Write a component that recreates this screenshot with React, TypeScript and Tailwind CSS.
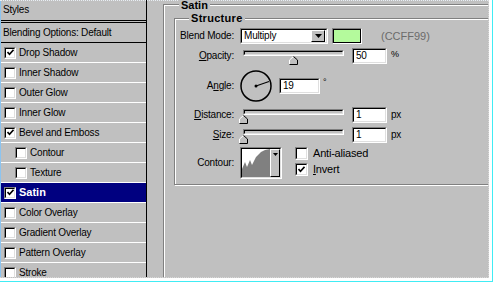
import React from 'react';

// Photoshop "Layer Style" dialog, Satin page (classic Win98 look)

const sunkenOuter = 'border border-t-[#808080] border-l-[#808080] border-b-white border-r-white';
const sunkenInner = 'border border-t-black border-l-black border-b-[#dfdfdf] border-r-[#dfdfdf]';
const raised = 'border border-t-white border-l-white border-b-black border-r-black';

type Item = { label: string; checked?: boolean; sub?: boolean; active?: boolean };

const items: Item[] = [
  { label: 'Drop Shadow', checked: true },
  { label: 'Inner Shadow' },
  { label: 'Outer Glow' },
  { label: 'Inner Glow' },
  { label: 'Bevel and Emboss', checked: true },
  { label: 'Contour', sub: true },
  { label: 'Texture', sub: true },
  { label: 'Satin', checked: true, active: true },
  { label: 'Color Overlay' },
  { label: 'Gradient Overlay' },
  { label: 'Pattern Overlay' },
  { label: 'Stroke' },
];

function Check({ checked, big }: { checked?: boolean; big?: boolean }) {
  return (
    <span className={`flex shrink-0 ${big ? 'w-[13px] h-[13px]' : 'w-[12px] h-[12px]'} ${sunkenOuter}`}>
      <span className={`flex flex-1 items-center justify-center bg-white ${sunkenInner}`}>
        {checked && (
          <svg width="7" height="7" viewBox="0 0 7 7">
            <path d="M0.5 3 L2.5 5.2 L6.5 0.8" stroke="black" strokeWidth="1.6" fill="none" />
          </svg>
        )}
      </span>
    </span>
  );
}

function Field({ value, w }: { value: string; w: string }) {
  return (
    <div className={`${w} h-[16px] flex ${sunkenOuter}`}>
      <div className={`flex-1 flex items-center bg-white pl-[2px] ${sunkenInner}`}>{value}</div>
    </div>
  );
}

function Thumb() {
  return (
    <svg width="9" height="9" viewBox="0 0 9 9">
      <path d="M0.5 8.5 V4 L4.5 0.5 L8.5 4 V8.5 Z" fill="#c0c0c0" />
      <path d="M0.5 8.5 V4 L4.5 0.5" stroke="white" fill="none" />
      <path d="M4.5 0.5 L8.5 4 V8.5 H0.5" stroke="black" fill="none" />
    </svg>
  );
}

function Slider({ value }: { value: number }) {
  const left = Math.round((value / 100) * 100) - 4;
  return (
    <div className="relative w-[101px] h-[16px] ml-[3px]">
      <div className={`mt-[4px] h-[6px] flex ${sunkenOuter}`}>
        <div className={`flex-1 bg-[#c0c0c0] ${sunkenInner}`} />
      </div>
      <div className="absolute top-[6px]" style={{ left }}>
        <Thumb />
      </div>
    </div>
  );
}

function U({ children }: { children: React.ReactNode }) {
  return <span className="underline underline-offset-[1px]">{children}</span>;
}

function Label({ children }: { children: React.ReactNode }) {
  return <div className="w-[59px] shrink-0 text-right whitespace-nowrap">{children}</div>;
}

export default function App() {
  return (
    <div className="w-[494px] h-[283px] bg-white overflow-hidden font-['Liberation_Sans',Arial,sans-serif] text-[10px] tracking-[-0.2px] text-black leading-none">
      <div className="w-[493px] h-[282px] border-r border-b border-[#40ecf4]">
        <div className="relative w-[489px] h-[278px] flex overflow-hidden bg-[#c0c0c0] border-r border-b border-dotted border-[#d8d8d8]">
          {/* marquee edge on top */}
          <div className="absolute top-0 left-0 right-0 h-[1px] border-t border-dotted border-[#e8eef4]" />

          {/* Styles list */}
          <div className="w-[147px] shrink-0 border-r border-black border-l border-l-[#8cc4f0]">
            <div className="h-[20px] flex items-center pl-[2px]">Styles</div>
            <div className="h-[3px] border-y border-black" />
            <div className="h-[20px] flex items-center pl-[2px] border-b border-black">
              Blending Options: Default
            </div>
            {items.map((it) => (
              <div
                key={it.label}
                className={`h-[20px] flex items-center gap-[3px] border-b border-white ${
                  it.sub ? 'pl-[14px]' : 'pl-[3px]'
                } ${it.active ? 'bg-[#000080] text-white font-bold text-[11px] tracking-normal' : ''}`}
              >
                <Check checked={it.checked} />
                <span>{it.label}</span>
              </div>
            ))}
          </div>

          {/* Satin page */}
          <div className="flex-1 pl-[16px] pt-[4px]">
            <div className="relative w-[360px] h-[320px] border border-[#808080] shadow-[inset_1px_1px_0_#fff,1px_1px_0_#fff]">
              <span className="absolute -top-[5px] left-[15px] px-[2px] bg-[#c0c0c0] font-bold text-[11px] tracking-normal">
                Satin
              </span>

              <div className="relative ml-[10px] mt-[13px] w-[340px] h-[167px] border border-[#808080] shadow-[inset_1px_1px_0_#fff,1px_1px_0_#fff]">
                <span className="absolute -top-[6px] left-[14px] px-[2px] bg-[#c0c0c0] font-bold text-[11px] tracking-[0.3px]">
                  Structure
                </span>

                <div className="flex flex-col">
                  {/* Blend mode */}
                  <div className="mt-[9px] h-[16px] flex items-center">
                    <Label>Blend Mode:</Label>
                    <div className={`ml-[6px] w-[88px] h-[16px] flex ${sunkenOuter}`}>
                      <div className={`flex-1 flex items-center bg-white pl-[2px] pr-[1px] ${sunkenInner}`}>
                        <span className="flex-1">Multiply</span>
                        <span className={`w-[14px] h-[12px] flex items-center justify-center bg-[#c0c0c0] ${raised}`}>
                          <svg width="7" height="4" viewBox="0 0 7 4">
                            <path d="M0 0 H7 L3.5 4 Z" fill="black" />
                          </svg>
                        </span>
                      </div>
                    </div>
                    <div className={`ml-[4px] w-[30px] h-[16px] flex ${sunkenOuter}`}>
                      <div className="flex-1 bg-[#b4fa9c] border border-black" />
                    </div>
                    <span className="ml-[19px] text-[11px] tracking-normal text-[#6b6b6b]">(CCFF99)</span>
                  </div>

                  {/* Opacity */}
                  <div className="mt-[4px] h-[16px] flex items-center">
                    <Label>
                      <U>O</U>pacity:
                    </Label>
                    <div className="ml-[6px]">
                      <Slider value={50} />
                    </div>
                    <div className="ml-[8px]">
                      <Field value="50" w="w-[35px]" />
                    </div>
                    <span className="ml-[4px] self-start mt-[2px] text-[9px]">%</span>
                  </div>

                  {/* Angle */}
                  <div className="mt-[6px] h-[32px] flex items-center">
                    <Label>
                      A<U>n</U>gle:
                    </Label>
                    <svg className="ml-[6px]" width="32" height="32" viewBox="0 0 32 32">
                      <circle cx="16" cy="16" r="15" stroke="black" strokeWidth="1.5" fill="none" />
                      <line x1="16" y1="16" x2="29" y2="11.6" stroke="black" strokeWidth="1.1" />
                      <circle cx="16" cy="16" r="1.5" fill="black" />
                    </svg>
                    <div className="ml-[7px]">
                      <Field value="19" w="w-[41px]" />
                    </div>
                    <span className="ml-[3px] self-start mt-[8px] text-[9px]">°</span>
                  </div>

                  {/* Distance */}
                  <div className="mt-[5px] h-[16px] flex items-center">
                    <Label>
                      <U>D</U>istance:
                    </Label>
                    <div className="ml-[6px]">
                      <Slider value={0} />
                    </div>
                    <div className="ml-[8px]">
                      <Field value="1" w="w-[35px]" />
                    </div>
                    <span className="ml-[4px]">px</span>
                  </div>

                  {/* Size */}
                  <div className="mt-[4px] h-[16px] flex items-center">
                    <Label>
                      <U>S</U>ize:
                    </Label>
                    <div className="ml-[6px]">
                      <Slider value={0} />
                    </div>
                    <div className="ml-[8px]">
                      <Field value="1" w="w-[35px]" />
                    </div>
                    <span className="ml-[4px]">px</span>
                  </div>

                  {/* Contour */}
                  <div className="mt-[4px] h-[32px] flex items-center">
                    <Label>Contour:</Label>
                    <div className={`ml-[6px] w-[42px] h-[32px] flex ${sunkenOuter}`}>
                      <div className={`flex-1 flex bg-white ${sunkenInner}`}>
                        <svg width="28" height="28" viewBox="0 0 28 28">
                          <path
                            d="M0 28 V20 L3 13 L5 18 L8 11 L10 16 L14 8 L19 3 L23 1 L28 0 V28 Z"
                            fill="#808080"
                          />
                        </svg>
                        <span className={`flex-1 flex justify-center pt-[3px] bg-[#c0c0c0] ${raised}`}>
                          <svg width="5" height="3" viewBox="0 0 5 3">
                            <path d="M0 0 H5 L2.5 3 Z" fill="black" />
                          </svg>
                        </span>
                      </div>
                    </div>
                    <div className="ml-[13px] self-start flex flex-col gap-[3px] text-[11px] tracking-[-0.2px]">
                      <div className="flex items-center gap-[5px] h-[13px]">
                        <Check big />
                        <span>Anti-aliased</span>
                      </div>
                      <div className="flex items-center gap-[5px] h-[13px]">
                        <Check big checked />
                        <span>
                          <U>I</U>nvert
                        </span>
                      </div>
                    </div>
                  </div>
                </div>
              </div>
            </div>
          </div>
        </div>
      </div>
    </div>
  );
}
